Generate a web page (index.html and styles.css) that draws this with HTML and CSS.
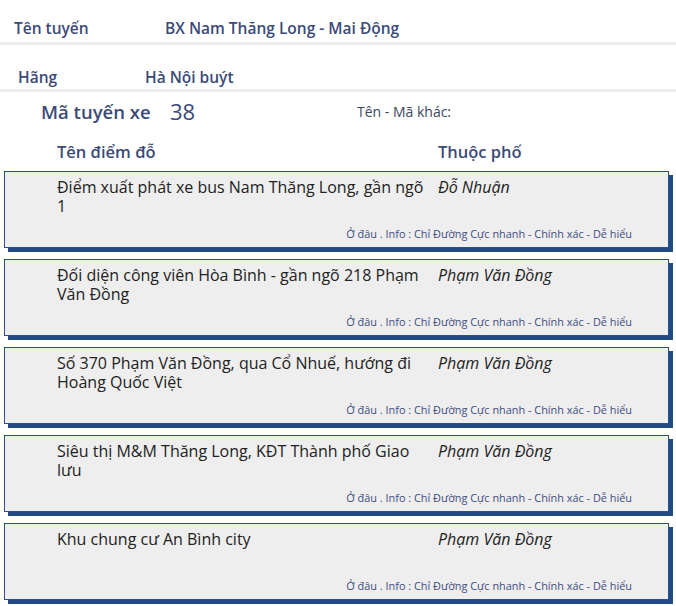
FILE: index.html
```html
<!DOCTYPE html>
<html lang="vi">
<head>
<meta charset="utf-8">
<link rel="stylesheet" href="styles.css">
</head>
<body>
<div class="info-row row-route">
  <span class="label label-route">Tên tuyến</span>
  <span class="value value-route">BX Nam Thăng Long - Mai Động</span>
</div>
<div class="info-row row-company">
  <span class="label label-company">Hãng</span>
  <span class="value value-company">Hà Nội buýt</span>
</div>
<div class="code-row">
  <span class="code-label">Mã tuyến xe</span>
  <span class="code-value">38</span>
  <span class="alt-label">Tên - Mã khác:</span>
</div>
<div class="table-head">
  <span class="col-name">Tên điểm đỗ</span>
  <span class="col-street">Thuộc phố</span>
</div>
<div class="stops">
  <div class="stop">
    <div class="stop-main">
      <div class="stop-name">Điểm xuất phát xe bus Nam Thăng Long, gần ngõ 1</div>
      <div class="stop-street">Đỗ Nhuận</div>
    </div>
    <div class="stop-foot">Ở đâu . Info : Chỉ Đường Cực nhanh - Chính xác - Dễ hiểu</div>
  </div>
  <div class="stop">
    <div class="stop-main">
      <div class="stop-name">Đối diện công viên Hòa Bình - gần ngõ 218 Phạm Văn Đồng</div>
      <div class="stop-street">Phạm Văn Đồng</div>
    </div>
    <div class="stop-foot">Ở đâu . Info : Chỉ Đường Cực nhanh - Chính xác - Dễ hiểu</div>
  </div>
  <div class="stop">
    <div class="stop-main">
      <div class="stop-name">Số 370 Phạm Văn Đồng, qua Cổ Nhuế, hướng đi Hoàng Quốc Việt</div>
      <div class="stop-street">Phạm Văn Đồng</div>
    </div>
    <div class="stop-foot">Ở đâu . Info : Chỉ Đường Cực nhanh - Chính xác - Dễ hiểu</div>
  </div>
  <div class="stop">
    <div class="stop-main">
      <div class="stop-name">Siêu thị M&amp;M Thăng Long, KĐT Thành phố Giao lưu</div>
      <div class="stop-street">Phạm Văn Đồng</div>
    </div>
    <div class="stop-foot">Ở đâu . Info : Chỉ Đường Cực nhanh - Chính xác - Dễ hiểu</div>
  </div>
  <div class="stop">
    <div class="stop-main">
      <div class="stop-name">Khu chung cư An Bình city</div>
      <div class="stop-street">Phạm Văn Đồng</div>
    </div>
    <div class="stop-foot">Ở đâu . Info : Chỉ Đường Cực nhanh - Chính xác - Dễ hiểu</div>
  </div>
</div>
</body>
</html>
```
FILE: styles.css
```css
html, body {
  margin: 0;
  padding: 0;
  background: #ffffff;
}
body {
  width: 676px;
  height: 606px;
  overflow: hidden;
  font-family: "Open Sans", "Noto Sans", sans-serif;
  color: #222;
}
.info-row {
  display: flex;
  align-items: flex-end;
  border-bottom: 3px solid #ececec;
  color: #3b4a78;
  font-size: 15.5px;
  font-weight: 600;
}
.row-route {
  height: 42px;
}
.info-row .label,
.info-row .value {
  line-height: 20px;
  padding-bottom: 4px;
}
.label-route { margin-left: 14px; width: 151px; }
.row-company {
  height: 44px;
}
.row-company .label,
.row-company .value {
  padding-bottom: 2px;
}
.label-company { margin-left: 18px; width: 127px; }
.code-row {
  display: flex;
  align-items: center;
  height: 38px;
  color: #3b4a78;
}
.code-label {
  margin-left: 41px;
  font-size: 18.5px;
  font-weight: 600;
  width: 129px;
}
.code-value {
  font-size: 22px;
  width: 187px;
  font-weight: 400;
}
.alt-label {
  font-size: 14px;
  color: #3b4860;
}
.table-head {
  display: flex;
  height: 40px;
  align-items: center;
  padding-top: 3px;
  box-sizing: border-box;
  color: #3b4a78;
  font-size: 16.5px;
  font-weight: 600;
}
.col-name { margin-left: 57px; width: 381px; }
.stops {
  display: flex;
  flex-direction: column;
  gap: 11px;
  padding-left: 4px;
  padding-top: 1px;
}
.stop {
  width: 663px;
  height: 75px;
  background: #eeeeee;
  border: 1px solid #2d4f86;
  box-shadow: 4px 4px 0 #1f4a86;
  display: flex;
  flex-direction: column;
  justify-content: space-between;
}
.stop-main {
  display: flex;
  padding-left: 52px;
  padding-top: 6px;
}
.stop-name {
  width: 372px;
  font-size: 16px;
  line-height: 19px;
  color: #222;
}
.stop-street {
  margin-left: 9px;
  font-style: italic;
  font-size: 16px;
  line-height: 19px;
  color: #222;
}
.stop-foot {
  align-self: flex-end;
  margin-right: 36px;
  font-size: 10.9px;
  color: #3e4d80;
  padding-bottom: 6px;
}
```
